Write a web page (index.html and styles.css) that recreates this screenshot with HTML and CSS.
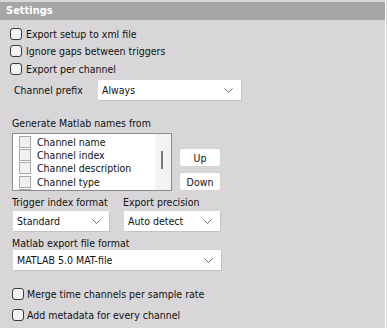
FILE: index.html
```html
<!DOCTYPE html>
<html lang="en">
<head>
    <meta charset="UTF-8">
    <title>Settings</title>
    <link rel="stylesheet" href="styles.css">
</head>
<body>

    <div class="panel">
        <div class="header">Settings</div>

        <div class="checks">
            <label class="check"><span class="box"></span>Export setup to xml file</label>
            <label class="check"><span class="box"></span>Ignore gaps between triggers</label>
            <label class="check"><span class="box"></span>Export per channel</label>
        </div>

        <div class="prefix-row">
            <span class="prefix-label">Channel prefix</span>
            <div class="select prefix-select">
                <span>Always</span>
                <svg class="chevron" width="9" height="5" viewBox="0 0 9 5"><path d="M0.5 0.5 L4.5 4.5 L8.5 0.5" fill="none" stroke="#6b6b6b" stroke-width="1"/></svg>
            </div>
        </div>

        <div class="label names-label">Generate Matlab names from</div>
        <div class="names-row">
            <div class="listbox">
                <div class="items">
                    <div class="item"><span class="lbox"></span>Channel name</div>
                    <div class="item"><span class="lbox"></span>Channel index</div>
                    <div class="item"><span class="lbox"></span>Channel description</div>
                    <div class="item"><span class="lbox"></span>Channel type</div>
                    <div class="item"><span class="lbox"></span>Channel number</div>
                </div>
                <div class="scroll"><div class="thumb"></div></div>
            </div>
            <div class="buttons">
                <button class="btn">Up</button>
                <button class="btn">Down</button>
            </div>
        </div>

        <div class="pair">
            <div class="col">
                <div class="col-label">Trigger index format</div>
                <div class="select small-select">
                    <span>Standard</span>
                    <svg class="chevron" width="9" height="5" viewBox="0 0 9 5"><path d="M0.5 0.5 L4.5 4.5 L8.5 0.5" fill="none" stroke="#6b6b6b" stroke-width="1"/></svg>
                </div>
            </div>
            <div class="col">
                <div class="col-label">Export precision</div>
                <div class="select small-select">
                    <span>Auto detect</span>
                    <svg class="chevron" width="9" height="5" viewBox="0 0 9 5"><path d="M0.5 0.5 L4.5 4.5 L8.5 0.5" fill="none" stroke="#6b6b6b" stroke-width="1"/></svg>
                </div>
            </div>
        </div>

        <div class="label format-label">Matlab export file format</div>
        <div class="select format-select">
            <span>MATLAB 5.0 MAT-file</span>
            <svg class="chevron" width="9" height="5" viewBox="0 0 9 5"><path d="M0.5 0.5 L4.5 4.5 L8.5 0.5" fill="none" stroke="#6b6b6b" stroke-width="1"/></svg>
        </div>

        <div class="checks bottom-checks">
            <label class="check"><span class="box"></span>Merge time channels per sample rate</label>
            <label class="check"><span class="box"></span>Add metadata for every channel</label>
        </div>
    </div>

</body>
</html>
```

FILE: styles.css
```css
body {
    margin: 0;
    background-color: #d8d6d8;
    font-family: 'DejaVu Sans Condensed', 'Liberation Sans', sans-serif;
    font-size: 10.5px;
    color: #111;
    white-space: nowrap;
}
.panel {
    width: 386px;
    height: 328px;
    padding-top: 2px;
    box-sizing: border-box;
    border-right: 1px solid #fff;
}
.header {
    height: 18px;
    line-height: 18px;
    background-color: #a6a6a6;
    color: #fff;
    font-weight: bold;
    font-size: 11px;
    padding-left: 6px;
}
.checks {
    margin-top: 5px;
    padding-left: 10px;
}
.check {
    display: flex;
    align-items: center;
    height: 17.5px;
}
.box {
    width: 10px;
    height: 10px;
    border: 1px solid #3a3a3a;
    border-radius: 3px;
    background-color: #f3f3f3;
    margin-right: 4px;
}
.prefix-row {
    display: flex;
    align-items: center;
    margin-top: 2.5px;
    padding-left: 14px;
}
.prefix-label {
    width: 84px;
}
.select {
    display: flex;
    align-items: center;
    justify-content: space-between;
    height: 20px;
    background-color: #fff;
    padding: 0 8px 0 4px;
    box-sizing: border-box;
    box-shadow: 1px 1px 0 #c4c2c4;
}
.prefix-select {
    width: 143px;
}
.label {
    height: 14px;
    line-height: 14px;
    padding-left: 12px;
}
.names-label {
    margin-top: 16px;
}
.names-row {
    display: flex;
    margin-top: 3px;
    padding-left: 12px;
}
.listbox {
    display: flex;
    width: 160px;
    height: 58px;
    border: 1px solid #8c8c8c;
    box-sizing: border-box;
    background-color: #fff;
    overflow: hidden;
}
.items {
    flex: 1;
    padding: 1px 0 0 6px;
    overflow: hidden;
}
.item {
    display: flex;
    align-items: center;
    height: 13.3px;
}
.lbox {
    width: 10px;
    height: 10px;
    border: 1px solid #a8a8a8;
    background-color: #f0f0f0;
    margin-right: 6px;
}
.scroll {
    width: 16px;
    background-color: #f4f4f4;
    position: relative;
}
.thumb {
    position: absolute;
    left: 6px;
    top: 17px;
    width: 2px;
    height: 18px;
    background-color: #7a7a7a;
}
.buttons {
    display: flex;
    flex-direction: column;
    gap: 7px;
    padding-top: 16px;
    margin-left: 8px;
}
.btn {
    width: 40px;
    height: 17px;
    padding: 0;
    border: none;
    border-radius: 3px;
    background-color: #fff;
    font-family: inherit;
    font-size: 10.5px;
    color: #111;
}
.pair {
    display: flex;
    margin-top: 4px;
    padding-left: 12px;
}
.pair .col:first-child {
    width: 111px;
}
.col-label {
    height: 14px;
    line-height: 14px;
}
.pair .select {
    margin-top: 2px;
    margin-left: 1px;
}
.small-select {
    width: 96px;
}
.format-label {
    margin-top: 5px;
}
.format-select {
    width: 208px;
    margin-left: 13px;
}
.bottom-checks {
    margin-top: 13px;
    padding-left: 12px;
}
.bottom-checks .check {
    height: 21px;
}
.bottom-checks .box {
    margin-right: 3px;
}
```
